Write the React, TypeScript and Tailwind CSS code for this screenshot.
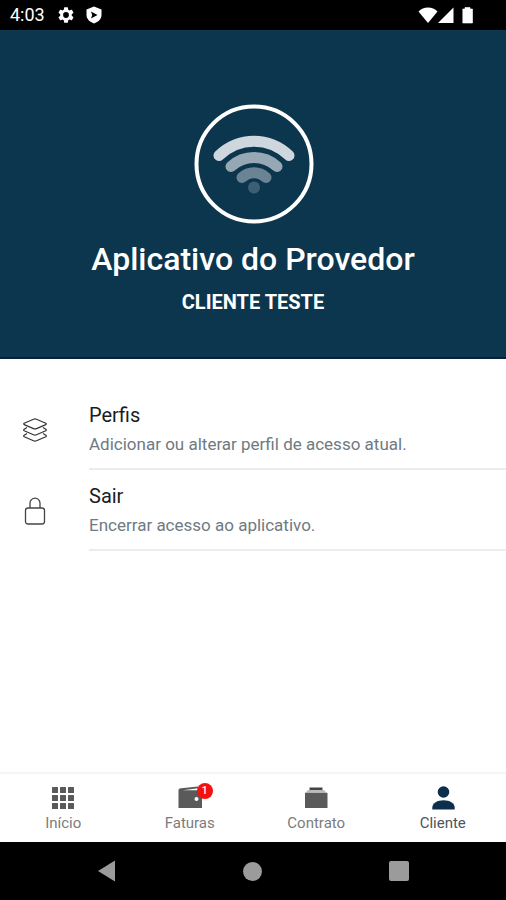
import React from "react";

const LayersIcon = () => (
    <svg viewBox="0 0 24 24" className="w-6 h-6" fill="none" stroke="#333333" strokeWidth="1.2" strokeLinejoin="round" aria-hidden="true">
        <path d="M10.5 1.2Q12 0.5 13.5 1.2L22.8 5.2Q23.8 5.8 22.8 6.6L13.5 10.6Q12 11.3 10.5 10.6L1.2 6.6Q0.2 5.8 1.2 5.2Z" />
        <path d="M4 9.5 1.2 11.2Q0.2 12 1.2 12.7L10.5 16.7Q12 17.4 13.5 16.7L22.8 12.7Q23.8 12 22.8 11.2L20 9.5" />
        <path d="M4 15.6 1.2 17.2Q0.2 18 1.2 18.7L10.5 22.8Q12 23.5 13.5 22.8L22.8 18.7Q23.8 18 22.8 17.2L20 15.6" />
    </svg>
);

const LockIcon = () => (
    <svg viewBox="0 0 24 28" className="w-6 h-7" fill="none" stroke="#444444" strokeWidth="1.3" aria-hidden="true">
        <rect x="2.5" y="11" width="19" height="16" rx="2.5" />
        <path d="M7 11V6.2a5 5 0 0 1 10 0V11" />
    </svg>
);

const GridIcon = () => (
    <svg viewBox="0 0 24 24" className="w-6 h-6" fill="currentColor" aria-hidden="true">
        {[1, 9, 17].map((y) => [1, 9, 17].map((x) => <rect key={`${x}-${y}`} x={x} y={y} width="6" height="6" rx="0.5" />))}
    </svg>
);

const WalletIcon = () => (
    <svg viewBox="0 0 24 24" className="w-6 h-6" aria-hidden="true">
        <path d="M0.5 4.5C0.5 2.8 1.5 2.4 3 2.2L20 0.5V4.5H24V22H0.5Z" fill="currentColor" />
        <path d="M5 4.2 20 2.2V4.2Z" fill="#ffffff" />
        <circle cx="18.5" cy="13" r="2" fill="#ffffff" />
    </svg>
);

const ContractIcon = () => (
    <svg viewBox="0 0 24 24" className="w-6 h-6" aria-hidden="true">
        <path d="M5.5 1.5h13v2.5h-13Z" fill="#444444" />
        <path d="M4 4h16l2.5 2.8h-21Z" fill="#bbbbbb" />
        <path d="M1 6.8h22.5V22H1Z" fill="currentColor" />
    </svg>
);

const PersonIcon = () => (
    <svg viewBox="0 0 24 24" className="w-6 h-6" fill="currentColor" aria-hidden="true">
        <circle cx="12.5" cy="6" r="5.8" />
        <path d="M1.3 23.5v-1.7C1.3 17 6.5 14.3 12.5 14.3s11.2 2.7 11.2 7.5v1.7Z" />
    </svg>
);

const options = [
    {
        title: "Perfis",
        description: "Adicionar ou alterar perfil de acesso atual.",
        icon: LayersIcon,
    },
    {
        title: "Sair",
        description: "Encerrar acesso ao aplicativo.",
        icon: LockIcon,
    },
];

const tabs = [
    { label: "Início", icon: GridIcon, badge: 0, active: false },
    { label: "Faturas", icon: WalletIcon, badge: 1, active: false },
    { label: "Contrato", icon: ContractIcon, badge: 0, active: false },
    { label: "Cliente", icon: PersonIcon, badge: 0, active: true },
];

const StatusBar = () => (
    <div className="flex h-[30px] items-center justify-between bg-black pl-[10px] pr-8 text-white">
        <div className="flex items-center">
            <span className="text-lg leading-5">4:03</span>
            <svg viewBox="2 2 20 20" className="ml-[13px] h-4 w-4" fill="currentColor" aria-hidden="true">
                <path d="M19.14 12.94c.04-.3.06-.61.06-.94s-.02-.64-.07-.94l2.03-1.58a.49.49 0 0 0 .12-.61l-1.92-3.32a.49.49 0 0 0-.59-.22l-2.39.96a7 7 0 0 0-1.62-.94l-.36-2.54a.48.48 0 0 0-.48-.41h-3.84a.48.48 0 0 0-.47.41l-.36 2.54a7.2 7.2 0 0 0-1.62.94l-2.39-.96a.48.48 0 0 0-.59.22L2.74 8.87a.48.48 0 0 0 .12.61l2.03 1.58c-.05.3-.09.63-.09.94s.02.64.07.94l-2.03 1.58a.49.49 0 0 0-.12.61l1.92 3.32c.12.22.37.29.59.22l2.39-.96c.5.38 1.03.7 1.62.94l.36 2.54c.05.24.24.41.48.41h3.84c.24 0 .44-.17.47-.41l.36-2.54a7.2 7.2 0 0 0 1.62-.94l2.39.96c.22.08.47 0 .59-.22l1.92-3.32a.48.48 0 0 0-.12-.61zM12 15.6a3.6 3.6 0 1 1 0-7.2 3.6 3.6 0 0 1 0 7.2" />
            </svg>
            <svg viewBox="0 0 16 18" className="ml-3 h-[18px] w-4" aria-hidden="true">
                <path d="M8 0.5 15.5 3.5V9c0 4-3.2 7-7.5 8.5C3.7 16 0.5 13 0.5 9V3.5Z" fill="#ffffff" />
                <path d="M5 5.5 11.5 9 5 12.5l1.2-3.5Z" fill="#000000" />
            </svg>
        </div>
        <div className="flex items-center">
            <svg viewBox="0 0 20 16" className="h-4 w-5" fill="currentColor" aria-hidden="true">
                <path d="M10 16 0.5 4.5C3 2 6.3 0.5 10 0.5s7 1.5 9.5 4Z" />
            </svg>
            <svg viewBox="0 0 16 16" className="h-4 w-4" fill="currentColor" aria-hidden="true">
                <path d="M15.5 0.5V16H0Z" />
            </svg>
            <svg viewBox="0 0 12 17" className="ml-2 h-[17px] w-3" fill="currentColor" aria-hidden="true">
                <path d="M3 0.5h5v1.5h2.5V16H0.8V2H3Z" stroke="currentColor" strokeWidth="0.6" strokeLinejoin="round" />
            </svg>
        </div>
    </div>
);

const Logo = () => (
    <svg viewBox="0 0 122 120" className="h-[120px] w-[122px]" fill="none" strokeLinecap="round" aria-hidden="true">
        <circle cx="62" cy="60" r="57.5" stroke="#ffffff" strokeWidth="4" />
        <path d="M27 51.5C47 32.5 77 32.5 97 51.5" stroke="#ced7dd" strokeWidth="11" />
        <path d="M39 62.5C52 50.5 72 50.5 85 62.5" stroke="#96a8b4" strokeWidth="11" />
        <path d="M50 73.5C57 67 67 67 74 73.5" stroke="#6b8494" strokeWidth="11" />
        <circle cx="62" cy="83.5" r="6" fill="#3d5f75" />
    </svg>
);

const App = () => {
    return (
        <div className="flex min-h-screen flex-col bg-white font-['Roboto',sans-serif]">
            <StatusBar />

            {/* Header */}
            <header className="flex flex-col items-center border-b-2 border-[#08203c] bg-[#0c364d] pt-[74px] pb-[41px] text-white">
                <Logo />
                <h1 className="mt-[15px] text-[32px] leading-10 font-medium">Aplicativo do Provedor</h1>
                <p className="mt-[9px] text-xl leading-7 font-bold">CLIENTE TESTE</p>
            </header>

            {/* Options */}
            <main className="flex-1 pt-[30px]">
                <ul>
                    {options.map((option) => (
                        <li key={option.title}>
                            <button type="button" className="flex w-full items-center text-left">
                                <span className="flex w-[89px] shrink-0 pl-[23px]">
                                    <option.icon />
                                </span>
                                <span className="flex-1 border-b-2 border-[#ececec] pt-3 pb-[10px]">
                                    <span className="block text-xl leading-7 text-[#1c1c1c]">{option.title}</span>
                                    <span className="mt-px block text-[17px] leading-7 text-[#6f7a82]">{option.description}</span>
                                </span>
                            </button>
                        </li>
                    ))}
                </ul>
            </main>

            {/* Tabs */}
            <nav className="grid grid-cols-4 border-t-2 border-[#f5f5f5] pt-3 pb-[9px]">
                {tabs.map((tab) => (
                    <a
                        key={tab.label}
                        href="#"
                        className={`flex flex-col items-center gap-[3px] ${tab.active ? "text-[#0c2f4d]" : "text-[#5a5a5a]"}`}
                    >
                        <span className="relative">
                            <tab.icon />
                            {tab.badge > 0 && (
                                <span className="absolute -top-[3px] -right-[11px] flex h-4 w-4 items-center justify-center rounded-full bg-[#f5110f] text-[11px] leading-4 font-medium text-white">
                                    {tab.badge}
                                </span>
                            )}
                        </span>
                        <span className={`text-[15px] leading-5 ${tab.active ? "text-[#4a5560]" : "text-[#7c7c7c]"}`}>{tab.label}</span>
                    </a>
                ))}
            </nav>

            {/* System navigation */}
            <div className="flex h-[58px] items-center justify-center gap-[127px] bg-black text-[#9b9b9b]">
                <button type="button" aria-label="Back">
                    <svg viewBox="0 0 18 22" className="h-[22px] w-[18px]" fill="currentColor" aria-hidden="true">
                        <path d="M17 0.5v21L0 11Z" />
                    </svg>
                </button>
                <button type="button" aria-label="Home">
                    <span className="block h-[19px] w-[19px] rounded-full bg-current" />
                </button>
                <button type="button" aria-label="Recents">
                    <span className="block h-5 w-5 rounded-xs bg-current" />
                </button>
            </div>
        </div>
    );
};

export default App;
